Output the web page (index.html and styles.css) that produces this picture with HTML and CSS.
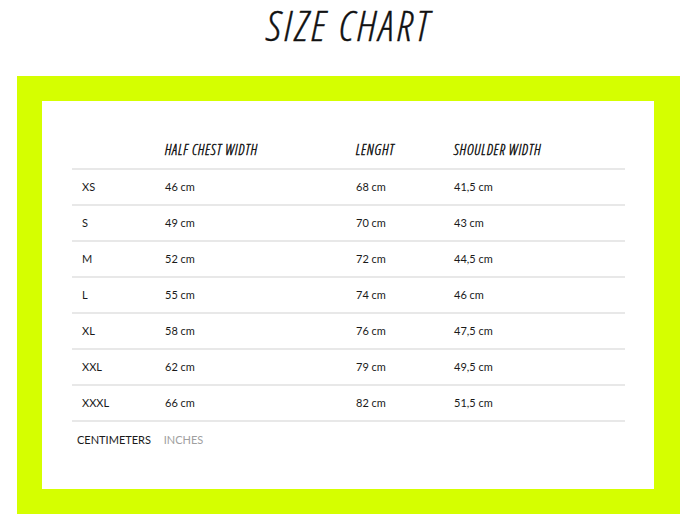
FILE: index.html
```html
<!DOCTYPE html>
<html>
<head>
<meta charset="utf-8">
<link rel="stylesheet" href="styles.css">
</head>
<body>
<h1 class="title">SIZE CHART</h1>
<div class="frame">
  <div class="card">
    <table class="chart">
      <thead>
        <tr>
          <th class="c1"></th>
          <th class="c2"><span class="hd">HALF CHEST WIDTH</span></th>
          <th class="c3"><span class="hd">LENGHT</span></th>
          <th class="c4"><span class="hd">SHOULDER WIDTH</span></th>
        </tr>
      </thead>
      <tbody>
        <tr><td>XS</td><td>46 cm</td><td>68 cm</td><td>41,5 cm</td></tr>
        <tr><td>S</td><td>49 cm</td><td>70 cm</td><td>43 cm</td></tr>
        <tr><td>M</td><td>52 cm</td><td>72 cm</td><td>44,5 cm</td></tr>
        <tr><td>L</td><td>55 cm</td><td>74 cm</td><td>46 cm</td></tr>
        <tr><td>XL</td><td>58 cm</td><td>76 cm</td><td>47,5 cm</td></tr>
        <tr><td>XXL</td><td>62 cm</td><td>79 cm</td><td>49,5 cm</td></tr>
        <tr><td>XXXL</td><td>66 cm</td><td>82 cm</td><td>51,5 cm</td></tr>
      </tbody>
    </table>
    <div class="units">
      <span class="unit active">CENTIMETERS</span>
      <span class="unit">INCHES</span>
    </div>
  </div>
</div>
</body>
</html>
```
FILE: styles.css
```css
* { box-sizing: border-box; }
body {
  margin: 0;
  background: #fff;
  font-family: Lato, "Liberation Sans", sans-serif;
  color: #1a1a1a;
}
.title {
  margin: 0;
  height: 76px;
  padding: 0 0 0 3px;
  text-align: center;
  font-family: "Open Sans", sans-serif;
  font-weight: 300;
  font-style: italic;
  font-stretch: 75%;
  font-size: 42px;
  line-height: 50px;
  letter-spacing: 3px;
  -webkit-text-stroke: 0.4px #111;
  color: #111;
}
.frame {
  margin-left: 17px;
  width: 663px;
  height: 438px;
  background: #d5ff00;
  padding: 25px 26px 25px 25px;
}
.card {
  background: #fff;
  height: 388px;
  padding: 30px 29px 0 30px;
}
.chart {
  width: 553px;
  border-collapse: collapse;
}
.chart tr { border-bottom: 2px solid #e8e8e8; }
.chart th {
  height: 38px;
  padding: 0 0 2px 10px;
  text-align: left;
  font-weight: normal;
  vertical-align: middle;
}
.chart td {
  height: 36px;
  padding: 0 0 2px 10px;
  font-size: 11px;
  vertical-align: middle;
}
.c1 { width: 83px; }
.c2 { width: 191px; }
.c3 { width: 98px; }
.c4 { width: 181px; }
.hd {
  font-family: "Open Sans", sans-serif;
  font-style: italic;
  font-weight: 300;
  font-stretch: 75%;
  font-size: 14px;
  letter-spacing: 0.9px;
  -webkit-text-stroke: 0.45px #111;
  color: #111;
}
.units {
  margin-top: 11px;
  padding-left: 5px;
  font-size: 11px;
  line-height: 14px;
}
.unit { color: #a0a0a0; margin-right: 10px; }
.unit.active { color: #1a1a1a; }
```
